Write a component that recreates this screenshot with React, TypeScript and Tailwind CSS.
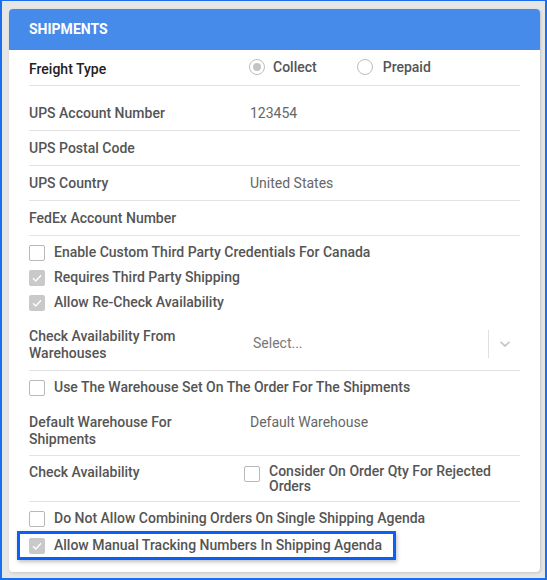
import React from "react";

const Checkbox = ({ checked }: { checked?: boolean }) =>
  checked ? (
    <span className="flex h-[16px] w-[16px] shrink-0 items-center justify-center rounded-[2px] bg-[#c9c9c9]">
      <svg width="10" height="8" viewBox="0 0 10 8" fill="none">
        <path d="M1 4.2 L3.8 7 L9 1.2" stroke="#fff" strokeWidth="1.3" />
      </svg>
    </span>
  ) : (
    <span className="block h-[16px] w-[16px] shrink-0 rounded-[2px] border-[1.5px] border-[#b8b8b8] bg-white" />
  );

const Radio = ({ checked }: { checked?: boolean }) => (
  <span className="flex h-[16px] w-[16px] shrink-0 items-center justify-center rounded-full border-[1.5px] border-[#bdbdbd] bg-white">
    {checked && <span className="h-[8px] w-[8px] rounded-full bg-[#c4c4c4]" />}
  </span>
);

const CheckRow = ({ label, checked }: { label: string; checked?: boolean }) => (
  <div className="flex h-[25px] items-center gap-[9px]">
    <Checkbox checked={checked} />
    <span className="text-[14px] font-medium text-[#555]">{label}</span>
  </div>
);

const Row = ({
  label,
  value,
  className,
}: {
  label: string;
  value?: string;
  className: string;
}) => (
  <div className={`flex border-b border-[#e2e2e2] ${className}`}>
    <div className="w-[221px] text-[14px] font-medium text-[#555]">{label}</div>
    {value && <div className="text-[14px] text-[#666]">{value}</div>}
  </div>
);

export default function App() {
  return (
    <div
      className="h-[580px] w-[547px] border-2 border-t-[1px] border-[#1a6ef0] bg-[#e6e6e6] pl-[7px] pr-[5px] pt-[8px]"
      style={{ fontFamily: "Roboto, 'Liberation Sans', sans-serif" }}
    >
      <div className="h-[563px] w-[531px] overflow-hidden rounded-[4px] bg-white shadow-[1px_1px_3px_rgba(0,0,0,0.15)]">
        <div className="flex h-[41px] items-center bg-[#468aea] px-[20px] text-[14px] font-bold text-white">
          SHIPMENTS
        </div>
        <div className="px-[20px]">
          <div className="flex h-[36px] items-center border-b border-[#e2e2e2] pt-[4px]">
            <div className="w-[220px] text-[14px] font-medium text-[#222]">Freight Type</div>
            <div className="-mt-[5px] flex items-center">
              <Radio checked />
              <span className="ml-[8px] text-[14px] font-medium text-[#555]">Collect</span>
              <span className="ml-[40px]">
                <Radio />
              </span>
              <span className="ml-[10px] text-[14px] font-medium text-[#555]">Prepaid</span>
            </div>
          </div>
          <Row label="UPS Account Number" value="123454" className="h-[45px] items-start pt-[17px]" />
          <Row label="UPS Postal Code" className="h-[35px] items-center" />
          <Row label="UPS Country" value="United States" className="h-[35px] items-center" />
          <Row label="FedEx Account Number" className="h-[35px] items-center" />

          <div className="pt-[4px]">
            <CheckRow label="Enable Custom Third Party Credentials For Canada" />
            <CheckRow label="Requires Third Party Shipping" checked />
            <CheckRow label="Allow Re-Check Availability" checked />
          </div>

          <div className="flex h-[56px] items-center border-b border-[#e2e2e2] pt-[4px]">
            <div className="w-[221px] text-[14px] font-medium leading-[17px] text-[#555]">
              Check Availability From
              <br />
              Warehouses
            </div>
            <div className="-mt-[2px] flex h-[28px] flex-1 items-center">
              <span className="ml-[3px] flex-1 text-[14px] text-[#777]">Select...</span>
              <span className="h-[28px] w-px bg-[#e0e0e0]" />
              <span className="flex w-[31px] justify-center">
                <svg width="12" height="8" viewBox="0 0 12 8" fill="none">
                  <path d="M1.5 1.8 L6 6 L10.5 1.8" stroke="#c8c8c8" strokeWidth="1.8" />
                </svg>
              </span>
            </div>
          </div>

          <div className="pt-[4px]">
            <CheckRow label="Use The Warehouse Set On The Order For The Shipments" />
          </div>

          <div className="flex h-[56px] items-start border-b border-[#e2e2e2] pt-[14px]">
            <div className="w-[221px] text-[14px] font-medium leading-[17px] text-[#555]">
              Default Warehouse For
              <br />
              Shipments
            </div>
            <div className="text-[14px] leading-[17px] text-[#666]">Default Warehouse</div>
          </div>

          <div className="flex h-[46px] items-start border-b border-[#e2e2e2] pt-[8px]">
            <div className="w-[215px] text-[14px] font-medium leading-[17px] text-[#555]">
              Check Availability
            </div>
            <div className="flex items-start gap-[9px]">
              <span className="mt-[2px] flex">
                <Checkbox />
              </span>
              <span className="text-[14px] font-medium leading-[15px] text-[#555]">
                Consider On Order Qty For Rejected
                <br />
                Orders
              </span>
            </div>
          </div>

          <div className="pt-[4px]">
            <CheckRow label="Do Not Allow Combining Orders On Single Shipping Agenda" />
            <div className="-ml-[12px] flex h-[29px] w-[379px] items-center gap-[9px] border-[3px] border-[#0a5ff5] pl-[9px] shadow-[1px_2px_4px_rgba(0,0,0,0.25)]">
              <Checkbox checked />
              <span className="text-[14px] font-medium text-[#555]">
                Allow Manual Tracking Numbers In Shipping Agenda
              </span>
            </div>
          </div>
        </div>
      </div>
    </div>
  );
}
